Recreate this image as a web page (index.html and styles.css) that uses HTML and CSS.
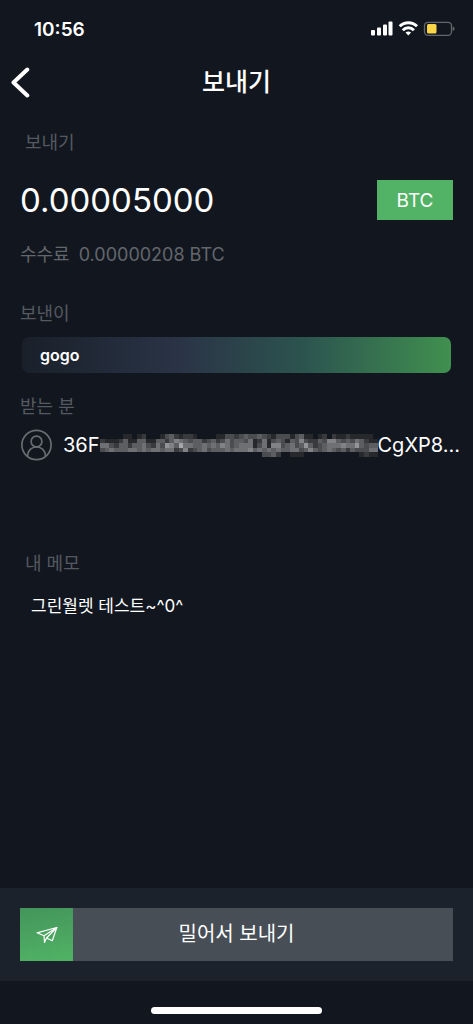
FILE: index.html
```html
<!DOCTYPE html>
<html lang="ko">
<head>
<meta charset="utf-8">
<meta name="viewport" content="width=device-width, initial-scale=1">
<title>보내기</title>
<link rel="stylesheet" href="styles.css">
</head>
<body>
<div class="screen">
  <div class="status">
    <span class="clock">10:56</span>
    <svg class="status-icons" width="86" height="16" viewBox="0 0 86 16" aria-hidden="true">
      <g fill="#fff">
        <rect x="2" y="9" width="4" height="5.500" rx="1"/>
        <rect x="8" y="6.500" width="4" height="8" rx="1"/>
        <rect x="14" y="3.500" width="4" height="11" rx="1"/>
        <rect x="19.500" y=".5" width="4" height="14" rx="1"/>
      </g>
      <g fill="none" stroke="#fff" stroke-width="2.900">
        <path d="M30.700 5.300A12.300 12.300 0 0 1 48 5.300"/>
        <path d="M33.800 9.200A7.600 7.600 0 0 1 44.900 9.200"/>
      </g>
      <path d="M39.300 14.500 36.500 11.600Q39.300 9.500 42.100 11.600Z" fill="#fff"/>
      <rect x="55.500" y="1.300" width="27" height="13" rx="3.500" fill="none" stroke="#62656b" stroke-width="1.300"/>
      <rect x="58" y="3" width="9.500" height="9.500" rx="1.500" fill="#f8d648"/>
      <path d="M83.700 5.500v4.600Q85.600 9.500 85.600 7.800T83.700 5.500" fill="#62656b"/>
    </svg>
  </div>

  <header class="topbar">
    <button class="back" type="button" aria-label="뒤로">
      <svg width="20" height="32" viewBox="0 0 20 32"><path d="M17.300 3.500 3.500 16.500 17.300 29.500" fill="none" stroke="#fff" stroke-width="4" stroke-linecap="round" stroke-linejoin="round"/></svg>
    </button>
    <h1 class="title">보내기</h1>
  </header>

  <main class="content">
    <label class="label label-inset" for="amount">보내기</label>
    <div class="amount-row">
      <input class="amount" id="amount" type="text" value="0.00005000">
      <button class="unit" type="button">BTC</button>
    </div>
    <p class="fee"><span>수수료</span><span>0.00000208 BTC</span></p>

    <h2 class="label from-label">보낸이</h2>
    <div class="wallet">gogo</div>

    <h2 class="label to-label">받는 분</h2>
    <div class="recipient">
      <svg class="avatar" width="32" height="32" viewBox="0 0 32 32" fill="none" stroke="#696c72" stroke-width="1.700" aria-hidden="true">
        <circle cx="16.500" cy="16" r="14.600"/>
        <circle cx="16.500" cy="12.500" r="5.400"/>
        <path d="M7.500 27.300C7.700 21.500 11.500 18 16.500 18S25.300 21.500 25.500 27.300"/>
      </svg>
      <span class="address">36F<svg class="mask" id="mask" viewBox="0 0 60 5" preserveAspectRatio="none" shape-rendering="crispEdges" aria-hidden="true"></svg>CgXP8...</span>
    </div>

    <label class="label label-inset memo-label" for="memo">내 메모</label>
    <textarea class="memo" id="memo" rows="2">그린월렛 테스트~^0^</textarea>
  </main>

  <footer class="send-bar">
    <button class="slider" type="button">
      <span class="thumb">
        <svg width="22" height="18" viewBox="0 0 22 18" fill="none" stroke="#fff" stroke-width="1.200" stroke-linejoin="round" aria-hidden="true">
          <path d="M1 6.800 20.800 1.500 16.300 14.800 10.500 12 8.500 16.500 8 9.800Z"/>
          <path d="M8 9.800 20.800 1.500 10.500 12"/>
        </svg>
      </span>
      <span class="slider-text">밀어서 보내기</span>
    </button>
  </footer>
  <div class="home"><span class="home-line"></span></div>
</div>
<script src="mask.js"></script>
</body>
</html>
```
FILE: styles.css
```css
* { box-sizing: border-box; }

body {
  margin: 0;
  background: #12171f;
  color: #fff;
  font-family: Inter, "Noto Sans CJK KR", sans-serif;
}

button, input, textarea {
  margin: 0;
  padding: 0;
  border: 0;
  border-radius: 0;
  background: none;
  color: inherit;
  font: inherit;
}

svg { display: block; }

.screen {
  display: flex;
  flex-direction: column;
  min-height: 100vh;
}

.status {
  display: flex;
  align-items: center;
  justify-content: space-between;
  height: 56px;
  padding: 2px 18px 0 34px;
}

.clock {
  font-size: 19px;
  font-weight: 600;
}

.topbar {
  display: grid;
  grid-template-columns: 48px 1fr 48px;
  align-items: center;
  height: 52px;
}

.back {
  padding-left: 10px;
  cursor: pointer;
}

.title {
  margin: 0;
  font-size: 25px;
  font-weight: 500;
  line-height: 32px;
  text-align: center;
}

.content {
  display: flex;
  flex-direction: column;
  flex: 1;
  padding: 23px 20px 0;
}

.label {
  margin: 0;
  color: #555960;
  font-size: 18px;
  font-weight: 400;
  line-height: 24px;
}

.label-inset { padding-left: 5px; }

.amount-row {
  display: flex;
  align-items: center;
  gap: 16px;
  margin-top: 25px;
}

.amount {
  flex: 1;
  min-width: 0;
  height: 40px;
  font-size: 33px;
}

.unit {
  width: 76px;
  height: 40px;
  background: #52b265;
  font-size: 19px;
}

.fee {
  display: flex;
  gap: 9px;
  margin: 23px 0 0;
  color: #62666d;
  font-size: 18px;
  line-height: 24px;
}

.from-label { margin-top: 35px; }

.wallet {
  margin: 11px 2px 0;
  padding: 0 18px;
  border-radius: 7px;
  background: linear-gradient(90deg, #19202a 0%, #2a3446 37%, #2c544f 66%, #40904f 100%);
  font-size: 16px;
  font-weight: 600;
  line-height: 36px;
}

.to-label { margin-top: 22px; }

.recipient {
  display: flex;
  align-items: center;
  gap: 11px;
  margin: 9px -7px 0 0;
}

.avatar { flex: none; }

.address {
  display: flex;
  flex: 1;
  align-items: center;
  font-size: 20px;
  line-height: 34px;
}

.mask {
  flex: 1;
  min-width: 0;
  height: 23px;
}

.memo-label { margin-top: 90px; }

.memo {
  width: 100%;
  margin-top: 18px;
  padding-left: 11px;
  font-size: 17px;
  line-height: 24px;
  resize: none;
}

.send-bar {
  padding: 20px;
  background: #1b222c;
}

.slider {
  display: flex;
  width: 100%;
  height: 53px;
  background: #484e56;
  cursor: pointer;
}

.thumb {
  display: grid;
  place-items: center;
  width: 53px;
  height: 53px;
  margin-right: -53px;
  background: linear-gradient(170deg, #44955a, #50b365);
}

.slider-text {
  flex: 1;
  font-size: 20px;
  line-height: 53px;
  text-align: center;
}

.home {
  display: flex;
  justify-content: center;
  height: 43px;
  padding-top: 26px;
}

.home-line {
  width: 36%;
  height: 7px;
  border-radius: 4px;
  background: #fff;
}
```
FILE: mask.js
```js
// Brightness of each block that hides the middle of the address, 0 to 9.
const rows = [
  "000001101200013421221000011332343343213331341101202112111110",
  "211124114411442465434423423534435125134314363224366434354211",
  "553244244532537648554454546534555135166345347423455565574344",
  "345444554545545523623453444545556454545445534643454342433355",
  "000000000000000000000000000000000003342001110000000000001211"
];
const mask = document.getElementById("mask");
rows.forEach((row, y) => {
  [...row].forEach((level, x) => {
    if (level === "0") return;
    const rect = document.createElementNS("http://www.w3.org/2000/svg", "rect");
    const tone = 20 + level * 18;
    rect.setAttribute("x", x);
    rect.setAttribute("y", y);
    rect.setAttribute("width", 1);
    rect.setAttribute("height", 1);
    rect.setAttribute("fill", `rgb(${tone}, ${tone + 2}, ${tone + 5})`);
    mask.append(rect);
  });
});
```
